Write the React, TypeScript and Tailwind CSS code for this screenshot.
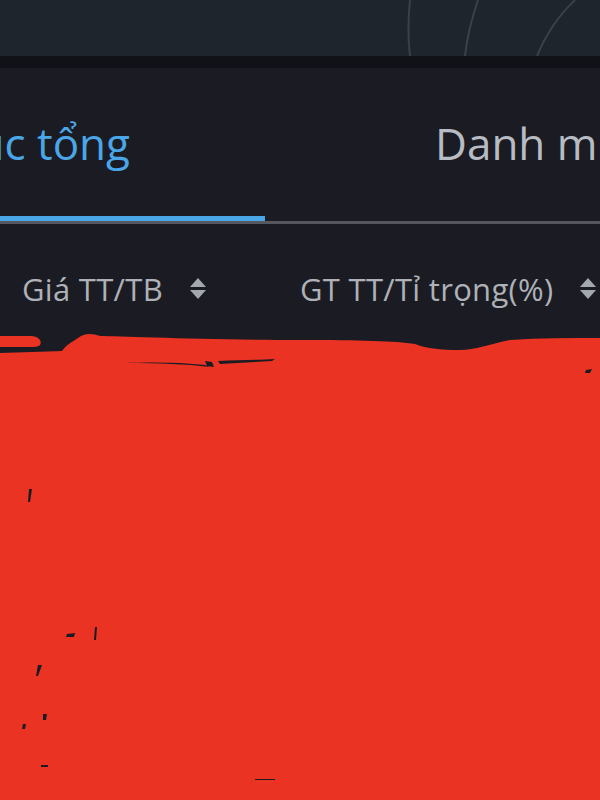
const font = "font-['Open_Sans','Lato',sans-serif]";

function SortIcon() {
	return (
		<svg width="18" height="24" viewBox="0 0 18 24" className="shrink-0">
			<path d="M9 1 L17 10 H1 Z" fill="#a3a7ae" />
			<path d="M1 13 H17 L9 22 Z" fill="#a3a7ae" />
		</svg>
	);
}

function TopBand() {
	return (
		<div className="relative h-[56px] bg-[#1f252d] overflow-hidden">
			<svg className="absolute inset-0" width="600" height="56" viewBox="0 0 600 56">
				<path d="M410 0 C408 20 408 40 410 56" stroke="#3b414a" strokeWidth="2" fill="none" />
				<path d="M478 0 C472 18 467 36 465 56" stroke="#3b414a" strokeWidth="2" fill="none" />
				<path d="M575 0 C560 14 546 34 537 56" stroke="#3b414a" strokeWidth="2" fill="none" />
			</svg>
		</div>
	);
}

function Tabs() {
	return (
		<div className="relative flex h-[156px] border-b-[3px] border-[#55585f] overflow-hidden">
			<div className="relative w-[265px] shrink-0 flex justify-end items-center pr-[135px] pb-[4px]">
				<span className="whitespace-nowrap text-[44px] text-[#4aa6e6]">Danh mục tổng</span>
				<div className="absolute left-0 right-0 bottom-[-1px] h-[6px] bg-[#4aa6e6]" />
			</div>
			<div className="flex-1 flex items-center pl-[170px] pb-[4px] min-w-0">
				<span className="whitespace-nowrap text-[44px] text-[#b7bbc2]">Danh mục cơ sở</span>
			</div>
		</div>
	);
}

function HeaderRow() {
	return (
		<div className="flex items-center h-[100px] pt-[30px] text-[31px] tracking-[0.3px] text-[#aeb1b7] whitespace-nowrap overflow-hidden">
			<div className="flex items-center gap-[26px] pl-[22px] w-[300px] shrink-0">
				<span>Giá TT/TB</span>
				<SortIcon />
			</div>
			<div className="flex items-center gap-[26px]">
				<span>GT TT/Tỉ trọng(%)</span>
				<SortIcon />
			</div>
		</div>
	);
}

function Scribble() {
	return (
		<svg className="absolute left-0 top-0" width="600" height="476" viewBox="0 0 600 476">
			<path
				d="M0 12 H30 C40 12 42 18 40 21 C38 23 34 23 30 23 H0 Z"
				fill="#eb3324"
			/>
			<path
				d="M0 29 C20 28 45 28 62 27 C66 21 72 18 78 14 C84 9 92 9 100 12 C120 12 200 16 300 16 C360 16 395 17 415 20 C425 24 440 26 460 26 C475 26 490 20 510 16 C540 14 570 14 600 14 V476 H0 Z"
				fill="#eb3324"
			/>
			<path d="M125 39 C160 39 185 40 210 43 L205 41 C180 38 150 38 125 39 Z" fill="#1b1c23" />
			<path d="M205 37 L212 38 L214 43 L207 42 Z" fill="#1b1c23" />
			<path d="M218 37 C240 36 260 36 275 35 L272 37 C255 38 235 39 220 40 Z" fill="#1b1c23" />
			<path d="M29 165 L32 165 L30 178 L28 178 Z" fill="#1b1c23" />
			<path d="M67 310 L75 309 L74 313 L66 313 Z" fill="#1b1c23" />
			<path d="M95 303 L97 303 L96 316 L94 316 Z" fill="#1b1c23" />
			<path d="M38 341 L42 341 L38 352 L36 352 Z" fill="#1b1c23" />
			<path d="M23 400 L26 400 L25 405 L22 405 Z" fill="#1b1c23" />
			<path d="M43 390 L47 390 L46 396 L43 396 Z" fill="#1b1c23" />
			<path d="M41 441 L48 441 L48 443 L41 443 Z" fill="#1b1c23" />
			<path d="M255 455 L275 455 L275 456 L255 456 Z" fill="#1b1c23" />
			<path d="M586 46 L592 45 L590 49 L585 49 Z" fill="#1b1c23" />
		</svg>
	);
}

export default function App() {
	return (
		<div className={`w-[600px] h-[800px] overflow-hidden bg-[#1b1c23] ${font}`}>
			<TopBand />
			<div className="h-[12px] bg-[#111217]" />
			<Tabs />
			<HeaderRow />
			<div className="relative h-[476px]">
				<Scribble />
			</div>
		</div>
	);
}
